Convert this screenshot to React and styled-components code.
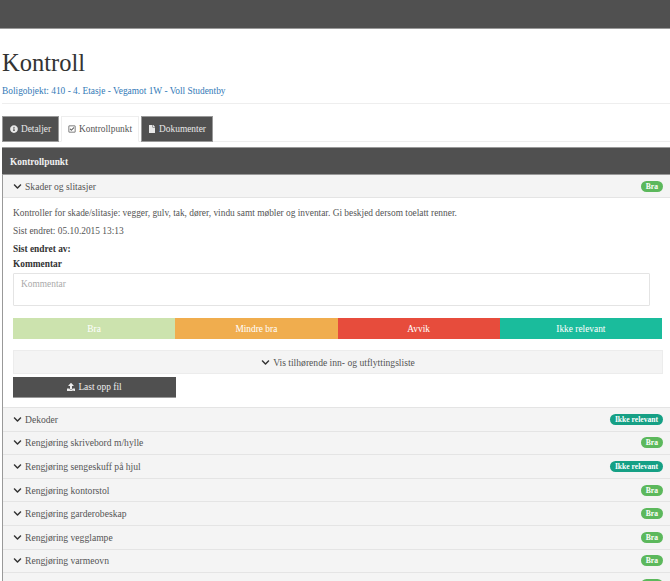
import React from 'react'
import styled, { createGlobalStyle } from 'styled-components'
import { FaChevronDown, FaInfoCircle, FaRegCheckSquare, FaFile, FaUpload } from 'react-icons/fa'

const GlobalStyle = createGlobalStyle`
html, body {
    margin: 0;
    height: 581px;
    overflow: hidden;
    background: #fff;
}
body {
    font-family: "Liberation Serif", "Times New Roman", serif;
    font-size: 9.4px;
    color: #333;
}
* { box-sizing: border-box; }
`

const TopBar = styled.div`
height: 29px;
background: #505050;
border-bottom: 1px solid #999;
`

const Content = styled.div`
padding: 0 0 0 2px;
`

const Title = styled.h1`
margin: 0;
padding-top: 20px;
height: 54px;
font-size: 24.5px;
line-height: 28px;
font-weight: 400;
color: #333;
`

const SubLink = styled.div`
height: 21px;
padding-top: 3px;
line-height: 11px;
font-size: 9.4px;
color: #337ab7;
border-bottom: 1px solid #eee;
margin-left: 0;
`

const Tabs = styled.div`
display: flex;
gap: 2px;
margin-top: 12px;
height: 26px;
border-bottom: 1px solid #eee;
`

const Tab = styled.div`
display: flex;
align-items: center;
justify-content: center;
gap: 3px;
height: 26px;
width: ${p => p.$w}px;
background: ${p => (p.$active ? '#fff' : '#505050')};
color: ${p => (p.$active ? '#555' : '#e8e8e8')};
border: 1px solid ${p => (p.$active ? '#eee' : '#999')};
border-bottom-color: ${p => (p.$active ? '#fff' : '#999')};
svg { font-size: 8px; }
`

const Panel = styled.div`
margin-top: 5px;
border-left: 1px solid #999;
`

const PanelHead = styled.div`
height: 28px;
margin-left: -1px;
padding: 1px 0 0 8px;
display: flex;
align-items: center;
background: #505050;
border-top: 1px solid #999;
border-bottom: 1px solid #999;
color: #f0f0f0;
font-weight: 700;
`

const Row = styled.div`
height: ${p => p.$h || 23.6}px;
display: flex;
align-items: center;
justify-content: space-between;
padding: 0 7px 0 10px;
background: #f4f4f4;
border-bottom: 1px solid #e4e4e4;
color: #555;
font-size: 9.6px;
`

const RowLabel = styled.span`
display: flex;
align-items: center;
gap: 3px;
svg { font-size: 9px; color: #333; }
`

const Badge = styled.span`
height: 11px;
padding: 0 5px;
line-height: 11px;
border-radius: 6px;
font-size: 7.6px;
font-weight: 700;
color: #fff;
background: ${p => p.$bg};
`

const Body = styled.div`
height: 210px;
padding: 0 7px 0 10px;
border-bottom: 1px solid #e4e4e4;
`

const Line = styled.div`
height: ${p => p.$h}px;
line-height: 12px;
font-weight: ${p => (p.$bold ? 700 : 400)};
color: ${p => (p.$bold ? '#333' : '#555')};
`

const TextArea = styled.div`
width: 637px;
height: 33px;
margin-top: 0;
padding: 5px 7px;
line-height: 11px;
border: 1px solid #e4e4e4;
border-radius: 1px;
color: #aaa;
`

const Choices = styled.div`
display: flex;
width: 649px;
margin-top: 12px;
height: 21px;
`

const Choice = styled.div`
flex: 1;
display: flex;
align-items: center;
justify-content: center;
background: ${p => p.$bg};
color: #fff;
`

const ListToggle = styled.div`
display: flex;
align-items: center;
justify-content: center;
gap: 3px;
width: 650px;
height: 24px;
margin-top: 11px;
background: #f4f4f4;
border: 1px solid #ececec;
color: #555;
font-size: 9.6px;
svg { font-size: 9px; color: #333; }
`

const UploadButton = styled.div`
display: flex;
align-items: center;
justify-content: center;
gap: 3px;
width: 163px;
height: 21px;
margin-top: 3px;
background: #505050;
border-bottom: 1px solid #999;
color: #eee;
svg { font-size: 8px; }
`

const GREEN = '#5cb85c'
const TEAL = '#16a085'

const items = [
    ['Dekoder', 'Ikke relevant', TEAL],
    ['Rengjøring skrivebord m/hylle', 'Bra', GREEN],
    ['Rengjøring sengeskuff på hjul', 'Ikke relevant', TEAL],
    ['Rengjøring kontorstol', 'Bra', GREEN],
    ['Rengjøring garderobeskap', 'Bra', GREEN],
    ['Rengjøring vegglampe', 'Bra', GREEN],
    ['Rengjøring varmeovn', 'Bra', GREEN],
    ['Rengjøring vindu', 'Bra', GREEN],
]

const App = () => {
    return (
        <>
            <GlobalStyle />
            <TopBar />
            <Content>
                <Title>Kontroll</Title>
                <SubLink>Boligobjekt: 410 - 4. Etasje - Vegamot 1W - Voll Studentby</SubLink>
                <Tabs>
                    <Tab $w={57}><FaInfoCircle /> Detaljer</Tab>
                    <Tab $w={78} $active><FaRegCheckSquare /> Kontrollpunkt</Tab>
                    <Tab $w={72}><FaFile /> Dokumenter</Tab>
                </Tabs>
                <Panel>
                    <PanelHead>Kontrollpunkt</PanelHead>
                    <Row $h={23}>
                        <RowLabel><FaChevronDown /> Skader og slitasjer</RowLabel>
                        <Badge $bg={GREEN}>Bra</Badge>
                    </Row>
                    <Body>
                        <Line $h={18} style={{ paddingTop: 9, height: 27 }}>Kontroller for skade/slitasje: vegger, gulv, tak, dører, vindu samt møbler og inventar. Gi beskjed dersom toelatt renner.</Line>
                        <Line $h={18}>Sist endret: 05.10.2015 13:13</Line>
                        <Line $h={15} $bold>Sist endret av:</Line>
                        <Line $h={15} $bold>Kommentar</Line>
                        <TextArea>Kommentar</TextArea>
                        <Choices>
                            <Choice $bg="#cce3ae">Bra</Choice>
                            <Choice $bg="#f0ad4e">Mindre bra</Choice>
                            <Choice $bg="#e74c3c">Avvik</Choice>
                            <Choice $bg="#1abc9c">Ikke relevant</Choice>
                        </Choices>
                        <ListToggle><FaChevronDown /> Vis tilhørende inn- og utflyttingsliste</ListToggle>
                        <UploadButton><FaUpload /> Last opp fil</UploadButton>
                    </Body>
                    {items.map(([name, status, color]) => (
                        <Row key={name}>
                            <RowLabel><FaChevronDown /> {name}</RowLabel>
                            <Badge $bg={color}>{status}</Badge>
                        </Row>
                    ))}
                </Panel>
            </Content>
        </>
    )
}

export default App
